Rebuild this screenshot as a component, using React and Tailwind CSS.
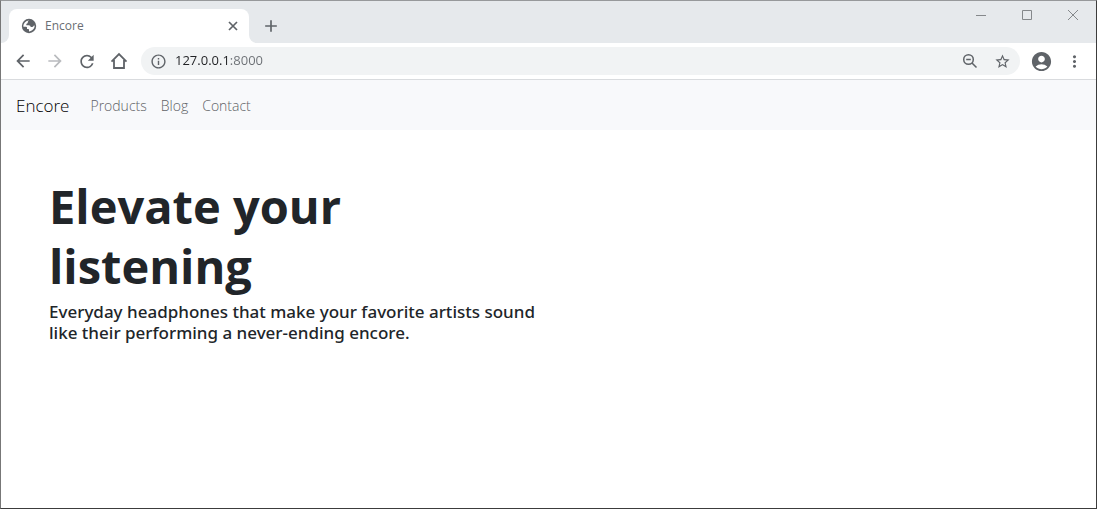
import {
  MdAccountCircle,
  MdAdd,
  MdArrowBack,
  MdArrowForward,
  MdInfoOutline,
  MdMoreVert,
  MdRefresh,
  MdStarBorder,
} from "react-icons/md";

function GlobeIcon() {
  return (
    <svg viewBox="0 0 16 16" className="size-4 shrink-0" aria-hidden="true">
      <circle cx="8" cy="8" r="7.2" fill="#5f6368" />
      <path
        d="M8.2 2.4c-1 .5-1.500 1.100-1.400 1.800.1.800-.5 1.200-1.200 1.500-.4.300-.2 1-.3 1.500h2.500c1.300 0 1.700.8 1.900 1.700h1.600c.8 0 1.200-.5 1.300-1.200l1.100-.1c-.1 3.200-2.500 5.700-5.700 5.800v-1.600c0-.5-.300-.8-.800-.8H6V9.600c0-.6-.400-.9-1-.9H2.400C2.100 5.400 4.700 2.500 8.200 2.400Z"
        fill="#fff"
      />
    </svg>
  );
}

function HomeIcon() {
  return (
    <svg viewBox="0 0 18 18" className="size-[18px]" fill="none" stroke="#5f6368" strokeWidth="1.800" aria-hidden="true">
      <path d="M1.500 9.600 9 2.100l7.500 7.500M4 8V16h10V8" />
    </svg>
  );
}

function ZoomOutIcon() {
  return (
    <svg viewBox="0 0 16 16" className="size-4" fill="none" stroke="#5f6368" strokeWidth="1.500" aria-hidden="true">
      <circle cx="6.500" cy="6.500" r="4.800" />
      <path d="m10 10 4.500 4.500M4.200 6.500h4.600" />
    </svg>
  );
}

function TabStrip() {
  return (
    <header className="flex h-[42px] items-end justify-between bg-[#e6e9ec]">
      <div className="flex items-end">
        <div className="h-2 w-2 bg-white">
          <div className="size-full rounded-br-lg bg-[#e6e9ec]" />
        </div>
        <div className="flex h-[34px] w-60 items-center gap-2 rounded-t-lg bg-white pr-2 pl-3">
          <GlobeIcon />
          <span className="flex-1 text-xs text-[#6a6e73]">Encore</span>
          <button aria-label="Close tab" className="flex size-4 items-center justify-center text-[#5f6368]">
            <svg viewBox="0 0 10 10" className="size-[10px]" stroke="currentColor" strokeWidth="1.700" aria-hidden="true">
              <path d="m1 1 8 8M9 1 1 9" />
            </svg>
          </button>
        </div>
        <div className="h-2 w-2 bg-white">
          <div className="size-full rounded-bl-lg bg-[#e6e9ec]" />
        </div>
        <button aria-label="New tab" className="flex h-[34px] w-7 items-center justify-center text-[#5f6368]">
          <MdAdd size={20} />
        </button>
      </div>
      <div className="flex h-7 self-start text-[#85888b]">
        <button aria-label="Minimize" className="flex w-[46px] items-center justify-center">
          <svg viewBox="0 0 10 10" className="size-[10px]" stroke="currentColor" aria-hidden="true">
            <path d="M0 5.500h10" />
          </svg>
        </button>
        <button aria-label="Maximize" className="flex w-[46px] items-center justify-center">
          <svg viewBox="0 0 10 10" className="size-[10px]" fill="none" stroke="currentColor" aria-hidden="true">
            <path d="M.5.5h9v9h-9Z" />
          </svg>
        </button>
        <button aria-label="Close window" className="flex w-[46px] items-center justify-center">
          <svg viewBox="0 0 10 10" className="size-[10px]" stroke="currentColor" aria-hidden="true">
            <path d="m0 0 10 10M10 0 0 10" />
          </svg>
        </button>
      </div>
    </header>
  );
}

function Toolbar() {
  return (
    <div className="flex h-[37px] items-center border-b border-[#d9dbde] bg-white px-3 text-[#5f6368]">
      <div className="flex w-32 items-center gap-3">
        <button aria-label="Back" className="flex size-5 items-center justify-center">
          <MdArrowBack size={20} />
        </button>
        <button aria-label="Forward" disabled className="flex size-5 items-center justify-center text-[#b9bbbe]">
          <MdArrowForward size={20} />
        </button>
        <button aria-label="Reload" className="flex size-5 items-center justify-center">
          <MdRefresh size={21} />
        </button>
        <button aria-label="Home" className="flex size-5 items-center justify-center">
          <HomeIcon />
        </button>
      </div>
      <div className="flex h-7 flex-1 items-center gap-2 rounded-full bg-[#f1f3f4] px-[9px]">
        <button aria-label="View site information">
          <MdInfoOutline size={17} />
        </button>
        <input
          type="text"
          aria-label="Address"
          defaultValue="127.0.0.1:8000"
          className="min-w-0 flex-1 bg-[linear-gradient(90deg,#202124_54px,#6b6f74_54px)] bg-clip-text text-[13px] text-transparent caret-[#202124] outline-none"
        />
        <div className="flex items-center gap-4">
          <button aria-label="Zoom">
            <ZoomOutIcon />
          </button>
          <button aria-label="Bookmark this page">
            <MdStarBorder size={17} />
          </button>
        </div>
      </div>
      <button aria-label="Profile" className="ml-[10px]">
        <MdAccountCircle size={23} />
      </button>
      <button aria-label="More" className="ml-3">
        <MdMoreVert size={19} />
      </button>
    </div>
  );
}

function SiteNav() {
  return (
    <nav className="flex h-[50px] items-center bg-[#f8f9fb] px-[15px] pt-px font-light">
      <a href="#home" className="mr-[21px] text-[17px] text-black">
        Encore
      </a>
      <div className="flex gap-[14px] pt-px text-sm text-[#606266]">
        <a href="#products">Products</a>
        <a href="#blog">Blog</a>
        <a href="#contact">Contact</a>
      </div>
    </nav>
  );
}

export default function App() {
  return (
    <div className="flex min-h-screen flex-col border border-t-[#97999b] border-r-[#3c3c3c] border-b-[#3c3c3c] border-l-[#777777] bg-white font-['Open_Sans','Noto_Sans',sans-serif]">
      <TabStrip />
      <Toolbar />
      <SiteNav />
      <main className="w-1/2 pt-[46px] pl-12 text-[#212529]">
        <h1 className="max-w-[320px] text-[47px] leading-[60px] font-bold">Elevate your listening</h1>
        <p className="mt-[5px] font-['Noto_Sans',sans-serif] text-[17px] leading-[21px] font-medium">
          Everyday headphones that make your favorite artists sound like their performing a never-ending encore.
        </p>
      </main>
    </div>
  );
}
